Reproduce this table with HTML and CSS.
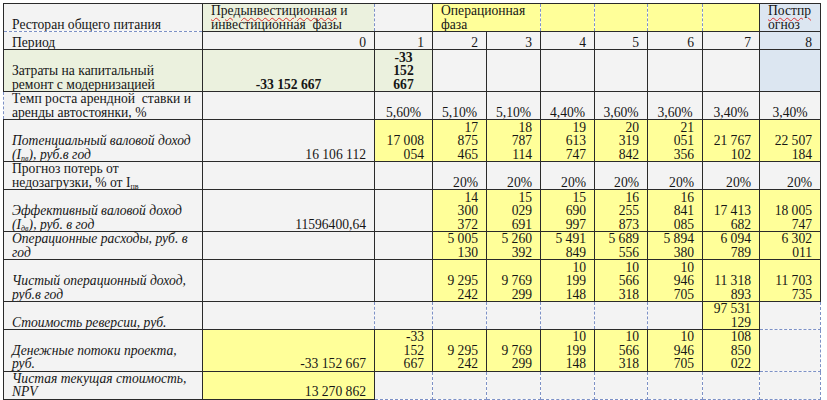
FILE: index.html
```html
<!DOCTYPE html>
<html lang="ru">
<head>
<meta charset="utf-8">
<title>Ресторан общего питания</title>
<link rel="stylesheet" href="styles.css">
</head>
<body>
<table class="grid">
  <colgroup>
    <col class="c-label"><col class="c-0"><col class="c-1"><col class="c-2"><col class="c-3"><col class="c-4"><col class="c-5"><col class="c-6"><col class="c-7"><col class="c-8">
  </colgroup>
  <tr class="r-head">
    <td class="lbl db">Ресторан общего питания</td>
    <td class="green top dr"><span class="sp-red">Предынвестиционная</span> и<br><span class="sp-green">инвестиционная&nbsp; фазы</span></td>
    <td class="dl"></td>
    <td class="yel top dr" colspan="2">Операционная<br>фаза</td>
    <td class="yel dl dr"></td>
    <td class="yel dl dr"></td>
    <td class="yel dl dr"></td>
    <td class="yel dl"></td>
    <td class="blue top"><span class="sp-red">Постпр</span><br><span class="sp-red">огноз</span></td>
  </tr>
  <tr class="r-period">
    <td class="lbl dt">Период</td>
    <td class="num">0</td>
    <td class="num">1</td>
    <td class="num">2</td>
    <td class="num">3</td>
    <td class="num">4</td>
    <td class="num">5</td>
    <td class="num">6</td>
    <td class="num">7</td>
    <td class="num blue">8</td>
  </tr>
  <tr class="r-3">
    <td class="lbl green">Затраты на капитальный<br>ремонт с модернизацией</td>
    <td class="ctr green b">-33 152 667</td>
    <td class="ctr green b">-33<br>152<br>667</td>
    <td></td><td></td><td></td><td></td><td></td><td></td>
    <td class="blue"></td>
  </tr>
  <tr class="r-2">
    <td class="lbl dl">Темп роста арендной&nbsp; ставки и<br>аренды автостоянки<span class="sp-green">,</span> %</td>
    <td></td>
    <td class="ctr">5,60%</td>
    <td class="ctr">5,10%</td>
    <td class="ctr">5,10%</td>
    <td class="ctr">4,40%</td>
    <td class="ctr">3,60%</td>
    <td class="ctr">3,60%</td>
    <td class="ctr">3,40%</td>
    <td class="ctr">3,40%</td>
  </tr>
  <tr class="r-3">
    <td class="lbl it">Потенциальный валовой доход<br><span class="sp-red">(I<sub>пв</sub>)</span>, руб<span class="sp-green">.в</span> год</td>
    <td class="num">16 106 112</td>
    <td class="num yel">17 008<br>054</td>
    <td class="num yel">17<br>875<br>465</td>
    <td class="num yel">18<br>787<br>114</td>
    <td class="num yel">19<br>613<br>747</td>
    <td class="num yel">20<br>319<br>842</td>
    <td class="num yel">21<br>051<br>356</td>
    <td class="num yel">21 767<br>102</td>
    <td class="num yel">22 507<br>184</td>
  </tr>
  <tr class="r-2b">
    <td class="lbl">Прогноз потерь от<br>недозагрузки, % от <span class="sp-red">I<sub>пв</sub></span></td>
    <td></td>
    <td></td>
    <td class="num">20%</td>
    <td class="num">20%</td>
    <td class="num">20%</td>
    <td class="num">20%</td>
    <td class="num">20%</td>
    <td class="num">20%</td>
    <td class="num">20%</td>
  </tr>
  <tr class="r-3">
    <td class="lbl it">Эффективный валовой доход<br><span class="sp-red">(I<sub>дв</sub>)</span>, руб. в год</td>
    <td class="num">11596400,64</td>
    <td></td>
    <td class="num yel">14<br>300<br>372</td>
    <td class="num yel">15<br>029<br>691</td>
    <td class="num yel">15<br>690<br>997</td>
    <td class="num yel">16<br>255<br>873</td>
    <td class="num yel">16<br>841<br>085</td>
    <td class="num yel">17 413<br>682</td>
    <td class="num yel">18 005<br>747</td>
  </tr>
  <tr class="r-2">
    <td class="lbl it">Операционные расходы, руб. в<br>год</td>
    <td></td>
    <td></td>
    <td class="num yel">5 005<br>130</td>
    <td class="num yel">5 260<br>392</td>
    <td class="num yel">5 491<br>849</td>
    <td class="num yel">5 689<br>556</td>
    <td class="num yel">5 894<br>380</td>
    <td class="num yel">6 094<br>789</td>
    <td class="num yel">6 302<br>011</td>
  </tr>
  <tr class="r-3">
    <td class="lbl it">Чистый операционный доход,<br>руб<span class="sp-green">.в</span> год</td>
    <td></td>
    <td></td>
    <td class="num yel">9 295<br>242</td>
    <td class="num yel">9 769<br>299</td>
    <td class="num yel">10<br>199<br>148</td>
    <td class="num yel">10<br>566<br>318</td>
    <td class="num yel">10<br>946<br>705</td>
    <td class="num yel">11 318<br>893</td>
    <td class="num yel">11 703<br>735</td>
  </tr>
  <tr class="r-2b">
    <td class="lbl it">Стоимость реверсии, руб.</td>
    <td class="dr"></td>
    <td class="dl dr"></td>
    <td class="dl dr"></td>
    <td class="dl dr"></td>
    <td class="dl dr"></td>
    <td class="dl dr"></td>
    <td class="dl"></td>
    <td class="num yel">97 531<br>129</td>
    <td class="dr db"></td>
  </tr>
  <tr class="r-3s">
    <td class="lbl it">Денежные потоки проекта,<br>руб.</td>
    <td class="num yel">-33 152 667</td>
    <td class="num yel">-33<br>152<br>667</td>
    <td class="num yel">9 295<br>242</td>
    <td class="num yel">9 769<br>299</td>
    <td class="num yel">10<br>199<br>148</td>
    <td class="num yel">10<br>566<br>318</td>
    <td class="num yel">10<br>946<br>705</td>
    <td class="num yel">108<br>850<br>022</td>
    <td class="dt dr db"></td>
  </tr>
  <tr class="r-2b">
    <td class="lbl it">Чистая текущая стоимость,<br>NPV</td>
    <td class="num yel">13 270 862</td>
    <td class="dr db"></td>
    <td class="dl dr db"></td>
    <td class="dl dr db"></td>
    <td class="dl dr db"></td>
    <td class="dl dr db"></td>
    <td class="dl dr db"></td>
    <td class="dl dr db"></td>
    <td class="dl dr db dt"></td>
  </tr>
</table>
</body>
</html>
```

FILE: styles.css
```css
html, body {
  margin: 0;
  padding: 0;
  background: #ffffff;
}

.grid {
  margin: 3px 0 0 3px;
  border-collapse: collapse;
  table-layout: fixed;
  width: 818px;
  font-family: "Liberation Serif", "Times New Roman", serif;
  font-size: 13.6px;
  line-height: 13.5px;
  color: #161616;
}

.c-label { width: 199px; }
.c-0 { width: 172px; }
.c-1 { width: 58px; }
.c-2 { width: 54px; }
.c-3 { width: 54px; }
.c-4 { width: 54px; }
.c-5 { width: 53px; }
.c-6 { width: 55px; }
.c-7 { width: 57px; }
.c-8 { width: 61px; }

.grid td {
  border: 1px solid #2a2a2a;
  background: #f3f3f3;
  padding: 0 7px 0 8px;
  vertical-align: bottom;
  text-align: left;
  white-space: nowrap;
  overflow: hidden;
}

.r-head { height: 28px; }
.r-period { height: 18px; }
.r-3 { height: 42px; }
.r-3s { height: 41px; }
.r-2 { height: 27px; }
.r-2b { height: 28px; }

.grid td.top { vertical-align: top; }
.grid td.num { text-align: right; padding: 0 8px 0 2px; }
.grid td.ctr { text-align: center; padding: 0 4px; }
.grid td.b { font-weight: bold; }
.grid td.it { font-style: italic; }

.grid td.green { background: #ebf1de; }
.grid td.yel { background: #ffff99; }
.grid td.blue { background: #dce6f1; }

.grid td.dt { border-top: 1px dashed #7d91c6; }
.grid td.db { border-bottom: 1px dashed #7d91c6; }
.grid td.dl { border-left: 1px dashed #7d91c6; }
.grid td.dr { border-right: 1px dashed #7d91c6; }

sub {
  font-size: 8px;
  line-height: 0;
  vertical-align: -2px;
}

.sp-red {
  text-decoration: underline wavy #e03030;
  text-decoration-thickness: 1px;
  text-underline-offset: 2px;
}

.sp-green {
  text-decoration: underline wavy #3aa040;
  text-decoration-thickness: 1px;
  text-underline-offset: 2px;
}
```
